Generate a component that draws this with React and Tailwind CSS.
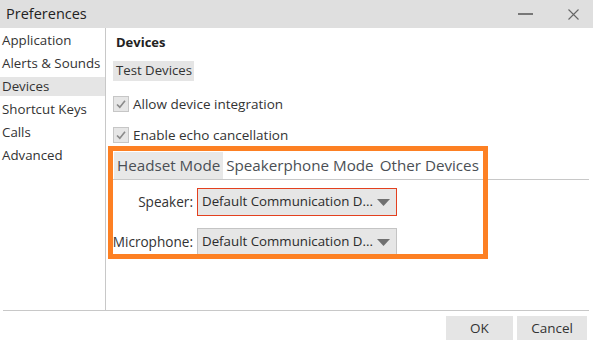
import { useState } from "react";

const sideItems = [
  "Application",
  "Alerts & Sounds",
  "Devices",
  "Shortcut Keys",
  "Calls",
  "Advanced",
];

const tabs = ["Headset Mode", "Speakerphone Mode", "Other Devices"];

function Check({ label }) {
  return (
    <div className="flex items-center h-[16px] ml-[7px]">
      <div className="w-[16px] h-[16px] border border-[#c6c6c6] bg-[#e6e6e6] flex items-center justify-center">
        <svg width="12" height="12" viewBox="0 0 12 12">
          <path d="M2 6.5 L4.8 9.2 L10 2.8" fill="none" stroke="#8a8a8a" strokeWidth="1.6" />
        </svg>
      </div>
      <span className="ml-[4px] text-[13.5px] text-[#333]">{label}</span>
    </div>
  );
}

function Select({ focused }) {
  return (
    <div
      className={
        "w-[200px] h-[28px] bg-[#e6e6e6] border flex items-center pl-[4px] pr-[6px] justify-between overflow-hidden " +
        (focused ? "border-[#e3401f]" : "border-[#c4c4c4]")
      }
    >
      <span className="text-[13.3px] text-[#2b2b2b] whitespace-nowrap">Default Communication D...</span>
      <svg width="13" height="7" viewBox="0 0 13 7" className="shrink-0">
        <path d="M0 0 H13 L6.5 7 Z" fill="#707070" />
      </svg>
    </div>
  );
}

export default function App() {
  const [active, setActive] = useState("Devices");
  const [tab, setTab] = useState(0);

  return (
    <div
      className="relative w-[593px] h-[343px] bg-white text-[#333] overflow-hidden"
      style={{ fontFamily: '"Open Sans", "Noto Sans", sans-serif' }}
    >
      {/* title bar */}
      <div className="h-[28px] bg-[#dfdfdf] flex items-center pl-[6px] pr-[14px]">
        <span className="text-[14.5px] text-[#222] flex-1">Preferences</span>
        <div className="w-[15px] h-[2px] bg-[#777] mr-[35px]" />
        <svg width="11" height="11" viewBox="0 0 11 11">
          <path d="M0.5 0.5 L10.5 10.5 M10.5 0.5 L0.5 10.5" stroke="#666" strokeWidth="1.1" />
        </svg>
      </div>

      <div className="flex h-[282px]">
        {/* sidebar */}
        <div className="w-[106px] border-r border-[#c8c8c8]">
          <div className="-mt-[1px]">
            {sideItems.map((s) => (
              <div
                key={s}
                onClick={() => setActive(s)}
                className={
                  "h-[19px] mt-[4px] pl-[2px] flex items-center text-[13.3px] whitespace-nowrap " +
                  (active === s ? "bg-[#e5e5e5]" : "")
                }
              >
                {s}
              </div>
            ))}
          </div>
        </div>

        {/* content */}
        <div className="flex-1 pr-[4px]">
          <div className="pl-[10px] pt-[4px] h-[26px] leading-[20px] text-[13px] font-bold text-[#222]">Devices</div>
          <div className="ml-[7px] mt-[7px] w-[81px] h-[20px] bg-[#e5e5e5] flex items-center pl-[3px] text-[13.2px] whitespace-nowrap">
            Test Devices
          </div>
          <div className="mt-[15px]">
            <Check label="Allow device integration" />
          </div>
          <div className="mt-[15px]">
            <Check label="Enable echo cancellation" />
          </div>

          {/* tabs */}
          <div className="ml-[4px] mt-[9px] border-b border-[#c8c8c8] flex h-[28px]">
            <div className="w-[4px]" />
            {tabs.map((t, i) => (
              <div
                key={t}
                onClick={() => setTab(i)}
                className={
                  "h-[27px] px-[3px] flex items-center text-[15.2px] text-[#4b4f55] whitespace-nowrap " +
                  (tab === i ? "bg-[#e8e8e8]" : "")
                }
              >
                {t}
              </div>
            ))}
          </div>

          <div className="flex items-center mt-[8px]">
            <div className="w-[91px] text-right pr-[4px] text-[13.6px]">Speaker:</div>
            <Select focused />
          </div>
          <div className="flex items-center mt-[12px]">
            <div className="w-[91px] text-right pr-[4px] text-[13.6px]">Microphone:</div>
            <Select />
          </div>
        </div>
      </div>

      {/* footer */}
      <div className="ml-[3px] w-[586px] border-t border-[#c8c8c8] flex justify-end pt-[5px] pr-[2px] gap-[4px]">
        <div className="w-[67px] h-[24px] bg-[#e5e5e5] flex items-center justify-center text-[13.5px]">OK</div>
        <div className="w-[70px] h-[24px] bg-[#e5e5e5] flex items-center justify-center text-[13.5px]">Cancel</div>
      </div>

      {/* highlight annotation */}
      <div className="absolute left-[108px] top-[146px] w-[380px] h-[113px] border-[5px] border-[#fd8023] pointer-events-none" />
    </div>
  );
}
